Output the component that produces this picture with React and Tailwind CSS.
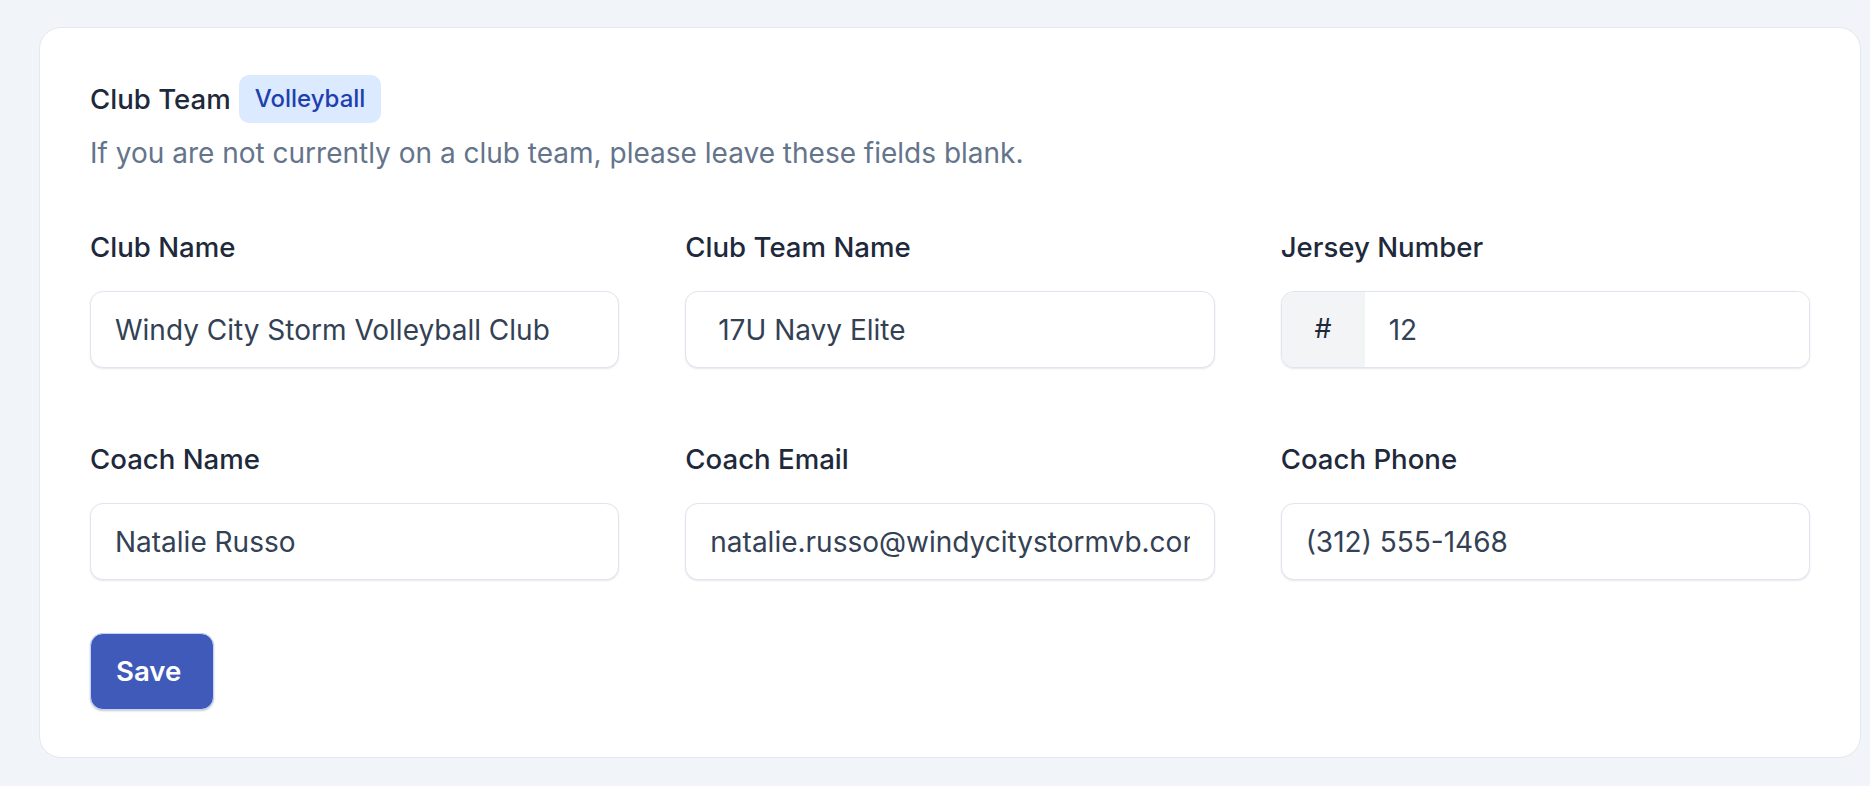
import { useState } from "react";

const FIELDS = [
  { id: "clubName", label: "Club Name", value: "Windy City Storm Volleyball Club" },
  { id: "clubTeam", label: "Club Team Name", value: " 17U Navy Elite" },
  { id: "jersey", label: "Jersey Number", value: "12", prefix: "#" },
  { id: "coachName", label: "Coach Name", value: "Natalie Russo" },
  { id: "coachEmail", label: "Coach Email", value: "natalie.russo@windycitystormvb.com" },
  { id: "coachPhone", label: "Coach Phone", value: "(312) 555-1468" },
];

const Field = ({ field, value, onChange }) => {
  return (
    <div className="flex flex-col">
      <label htmlFor={field.id} className="text-[27.6px] leading-[38px] font-medium text-[#1e293b]">
        {field.label}
      </label>
      {field.prefix ? (
        <div className="mt-[25px] flex h-[77px] rounded-[13px] border border-[#dfe5ef] bg-white shadow-[0_1px_2px_rgba(15,23,42,0.1)] overflow-hidden">
          <span className="w-[83px] flex items-center justify-center bg-[#f3f4f6] text-[27px] text-[#1e293b]">
            {field.prefix}
          </span>
          <input
            id={field.id}
            value={value}
            onChange={(e) => onChange(field.id, e.target.value)}
            className="flex-1 min-w-0 px-[24px] text-[28px] text-[#334155] outline-none bg-white"
          />
        </div>
      ) : (
        <input
          id={field.id}
          value={value}
          onChange={(e) => onChange(field.id, e.target.value)}
          className="mt-[25px] h-[77px] w-full rounded-[13px] border border-[#dfe5ef] bg-white px-[24px] text-[28px] text-[#334155] shadow-[0_1px_2px_rgba(15,23,42,0.1)] outline-none"
        />
      )}
    </div>
  );
};

export default function App() {
  const [values, setValues] = useState(
    Object.fromEntries(FIELDS.map((f) => [f.id, f.value]))
  );

  const handleChange = (id, v) => setValues((prev) => ({ ...prev, [id]: v }));

  return (
    <div
      className="min-h-[786px] bg-[#f1f5f9] pl-[39px] pr-[9px] pt-[27px] pb-[27px]"
      style={{ fontFamily: "Inter, 'Noto Sans', sans-serif" }}
    >
      <div className="rounded-[22px] border border-[#e2e8f0] bg-white px-[50px] pt-[47px] pb-[47px]">
        <div className="flex items-center gap-[8px]">
          <h2 className="text-[27.6px] leading-[40px] font-medium text-[#1e293b]">Club Team</h2>
          <span className="h-[48px] flex items-center rounded-[10px] bg-[#dbeafe] px-[16px] text-[24px] font-medium text-[#1e40af]">
            Volleyball
          </span>
        </div>
        <p className="mt-[11px] text-[28px] leading-[38px] text-[#64748b]">
          If you are not currently on a club team, please leave these fields blank.
        </p>

        <div className="mt-[56px] grid grid-cols-3 gap-x-[66px] gap-y-[72px]">
          {FIELDS.map((f) => (
            <Field key={f.id} field={f} value={values[f.id]} onChange={handleChange} />
          ))}
        </div>

        <button
          type="button"
          className="mt-[53px] h-[77px] w-[124px] flex items-center pl-[25px] rounded-[13px] bg-[#3f5ab9] text-[27.6px] font-semibold text-white shadow-[0_1px_2px_rgba(30,41,59,0.25)] border border-[#c7d2fe]"
        >
          Save
        </button>
      </div>
    </div>
  );
}
